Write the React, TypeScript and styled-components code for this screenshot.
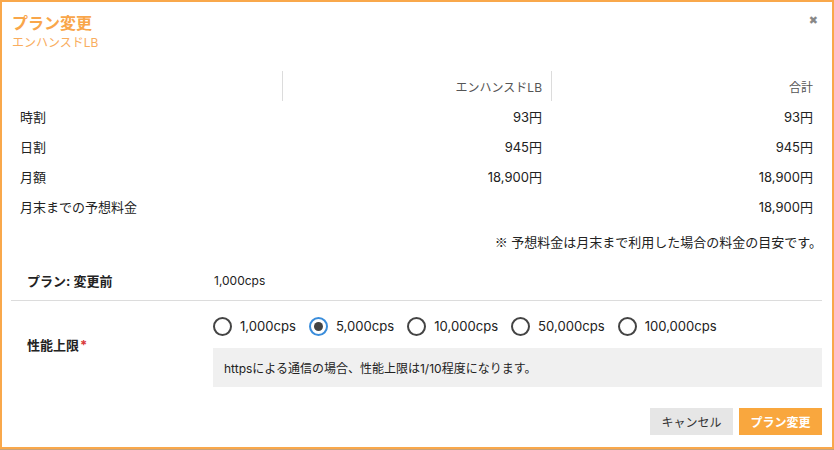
import React, { useState } from "react";
import styled, { createGlobalStyle } from "styled-components";

const GlobalStyle = createGlobalStyle`
  html, body {
    margin: 0;
    padding: 0;
    background: #c9a37a;
  }
  body {
    font-family: Inter, "Noto Sans CJK JP", sans-serif;
    color: #222;
  }
  * {
    box-sizing: border-box;
  }
`;

const Modal = styled.div`
  width: 834px;
  height: 449px;
  border: 2px solid #f9a84b;
  background: #fff;
  display: flex;
  flex-direction: column;
`;

const Header = styled.div`
  display: flex;
  justify-content: space-between;
  align-items: flex-start;
  padding: 10px 14px 0 10px;
`;

const Title = styled.h1`
  margin: 0;
  font-family: "Noto Sans CJK JP", sans-serif;
  font-size: 16px;
  line-height: 20px;
  font-weight: 700;
  color: #f9a64a;
`;

const Subtitle = styled.div`
  font-size: 12px;
  line-height: 16px;
  margin-top: 3px;
  color: #f9ad5e;
`;

const Close = styled.button`
  border: none;
  background: none;
  padding: 0;
  margin-top: 3px;
  font-family: "DejaVu Sans", sans-serif;
  font-size: 11px;
  line-height: 12px;
  color: #888;
  cursor: pointer;
`;

const PriceTable = styled.div`
  display: grid;
  grid-template-columns: 262px 269px 1fr;
  margin: 20px 10px 0 18px;
`;

const HeadCell = styled.div<{ $sep?: boolean }>`
  height: 30px;
  display: flex;
  align-items: center;
  justify-content: flex-end;
  padding-right: 9px;
  font-size: 12px;
  color: #555;
  border-left: ${(p) => (p.$sep ? "1px solid #dcdcdc" : "none")};
`;

const Cell = styled.div<{ $right?: boolean }>`
  height: 30px;
  display: flex;
  align-items: center;
  justify-content: ${(p) => (p.$right ? "flex-end" : "flex-start")};
  padding-right: ${(p) => (p.$right ? "9px" : "0")};
  font-size: 13px;
  color: #222;
`;

const Note = styled.div`
  text-align: right;
  font-size: 13px;
  line-height: 18px;
  margin: 12px 10px 0 0;
  color: #222;
`;

const Mark = styled.span`
  font-family: "Noto Sans CJK JP", sans-serif;
`;

const Form = styled.div`
  margin: 10px 10px 0 9px;
`;

const FormRow = styled.div<{ $divider?: boolean }>`
  display: grid;
  grid-template-columns: 202px 1fr;
  align-items: center;
  border-bottom: ${(p) => (p.$divider ? "1px solid #dcdcdc" : "none")};
  padding: ${(p) => (p.$divider ? "10px 0" : "0")};
`;

const Label = styled.div`
  padding-left: 16px;
  font-size: 13px;
  font-weight: 700;
  color: #222;
`;

const Required = styled.span`
  color: #d9383a;
  margin-left: 1px;
`;

const Value = styled.div`
  font-size: 12px;
  padding-left: 1px;
  color: #222;
`;

const FieldBody = styled.div`
  padding-top: 16px;
`;

const RadioGroup = styled.div`
  display: flex;
  align-items: center;
  gap: 13px;
  height: 18px;
`;

const RadioOption = styled.label`
  display: flex;
  align-items: center;
  gap: 8px;
  font-size: 13.1px;
  color: #222;
  cursor: pointer;
`;

const RadioCircle = styled.span<{ $checked: boolean }>`
  width: 19px;
  height: 19px;
  border-radius: 50%;
  border: 2px solid ${(p) => (p.$checked ? "#3a8ddb" : "#444")};
  display: flex;
  align-items: center;
  justify-content: center;
  &::after {
    content: "";
    width: 9px;
    height: 9px;
    border-radius: 50%;
    background: #444;
    display: ${(p) => (p.$checked ? "block" : "none")};
  }
`;

const HelpBox = styled.div`
  margin-top: 13px;
  height: 39px;
  background: #f0f0f0;
  display: flex;
  align-items: center;
  padding-left: 11px;
  font-size: 12px;
  color: #222;
`;

const Footer = styled.div`
  display: flex;
  justify-content: flex-end;
  gap: 6px;
  margin: 21px 10px 0 0;
`;

const Button = styled.button<{ $primary?: boolean }>`
  width: 83px;
  height: 27px;
  border: none;
  font-family: "Noto Sans CJK JP", sans-serif;
  font-size: 12px;
  font-weight: ${(p) => (p.$primary ? 700 : 400)};
  background: ${(p) => (p.$primary ? "#f9a73e" : "#e6e6e6")};
  color: ${(p) => (p.$primary ? "#fff" : "#333")};
  cursor: pointer;
`;

const rows = [
  { name: "時割", lb: "93円", total: "93円" },
  { name: "日割", lb: "945円", total: "945円" },
  { name: "月額", lb: "18,900円", total: "18,900円" },
  { name: "月末までの予想料金", lb: "", total: "18,900円" },
];

const options = ["1,000cps", "5,000cps", "10,000cps", "50,000cps", "100,000cps"];

export default function App() {
  const [selected, setSelected] = useState("5,000cps");

  return (
    <>
      <GlobalStyle />
      <Modal>
        <Header>
          <div>
            <Title>プラン変更</Title>
            <Subtitle>エンハンスドLB</Subtitle>
          </div>
          <Close>✖</Close>
        </Header>

        <PriceTable>
          <HeadCell />
          <HeadCell $sep>エンハンスドLB</HeadCell>
          <HeadCell $sep>合計</HeadCell>
          {rows.map((r) => (
            <React.Fragment key={r.name}>
              <Cell>{r.name}</Cell>
              <Cell $right>{r.lb}</Cell>
              <Cell $right>{r.total}</Cell>
            </React.Fragment>
          ))}
        </PriceTable>

        <Note>
          <Mark>※</Mark> 予想料金は月末まで利用した場合の料金の目安です。
        </Note>

        <Form>
          <FormRow $divider>
            <Label>プラン: 変更前</Label>
            <Value>1,000cps</Value>
          </FormRow>
          <FormRow>
            <Label>
              性能上限<Required>*</Required>
            </Label>
            <FieldBody>
              <RadioGroup>
                {options.map((o) => (
                  <RadioOption key={o} onClick={() => setSelected(o)}>
                    <RadioCircle $checked={selected === o} />
                    {o}
                  </RadioOption>
                ))}
              </RadioGroup>
              <HelpBox>httpsによる通信の場合、性能上限は1/10程度になります。</HelpBox>
            </FieldBody>
          </FormRow>
        </Form>

        <Footer>
          <Button>キャンセル</Button>
          <Button $primary>プラン変更</Button>
        </Footer>
      </Modal>
    </>
  );
}
